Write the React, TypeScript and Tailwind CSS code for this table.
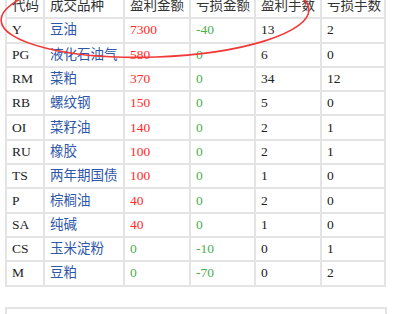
const rows: [string, string, number, number, number, number][] = [
  ['Y', '豆油', 7300, -40, 13, 2],
  ['PG', '液化石油气', 580, 0, 6, 0],
  ['RM', '菜粕', 370, 0, 34, 12],
  ['RB', '螺纹钢', 150, 0, 5, 0],
  ['OI', '菜籽油', 140, 0, 2, 1],
  ['RU', '橡胶', 100, 0, 2, 1],
  ['TS', '两年期国债', 100, 0, 1, 0],
  ['P', '棕榈油', 40, 0, 2, 0],
  ['SA', '纯碱', 40, 0, 1, 0],
  ['CS', '玉米淀粉', 0, -10, 0, 1],
  ['M', '豆粕', 0, -70, 0, 2],
]

const headers = ['代码', '成交品种', '盈利金额', '亏损金额', '盈利手数', '亏损手数']
const widths = ['w-[38px]', 'w-[80px]', 'w-[66px]', 'w-[65px]', 'w-[66px]', 'w-[64px]']

const cell = 'border-2 border-[#e4e4e4] pl-[5px] pr-0 text-left font-normal align-middle whitespace-nowrap overflow-hidden'

export default function App() {
  return (
    <div className="relative h-[314px] w-[418px] overflow-hidden bg-white text-[13.5px] leading-[18px] text-[#222] [font-family:'Liberation_Serif','Noto_Sans_CJK_SC',serif]">
      <table className="ml-[5px] mt-[-7px] table-fixed border-collapse">
        <thead>
          <tr className="h-[24.3px]">
            {headers.map((h, i) => (
              <th key={h} className={`${cell} ${widths[i]} text-[#333]`}>{h}</th>
            ))}
          </tr>
        </thead>
        <tbody>
          {rows.map(([code, name, win, loss, wn, ln]) => (
            <tr key={code} className="h-[24.3px]">
              <td className={cell}>{code}</td>
              <td className={`${cell} text-[#2f57a8]`}>{name}</td>
              <td className={`${cell} ${win > 0 ? 'text-[#ff2b2b]' : 'text-[#4cae4c]'}`}>{win}</td>
              <td className={`${cell} text-[#4cae4c]`}>{loss}</td>
              <td className={cell}>{wn}</td>
              <td className={cell}>{ln}</td>
            </tr>
          ))}
        </tbody>
      </table>

      <div className="ml-[5px] mt-[20px] h-[40px] w-[382px] border-2 border-[#e4e4e4]" />

      {/* hand-drawn highlight around the first row */}
      <svg className="pointer-events-none absolute left-0 top-0" width="418" height="80" aria-hidden="true">
        <ellipse cx="155" cy="15" rx="154" ry="42" fill="none" stroke="#f03a3a" strokeWidth="1.6" transform="rotate(-2 155 15)" />
      </svg>
    </div>
  )
}
